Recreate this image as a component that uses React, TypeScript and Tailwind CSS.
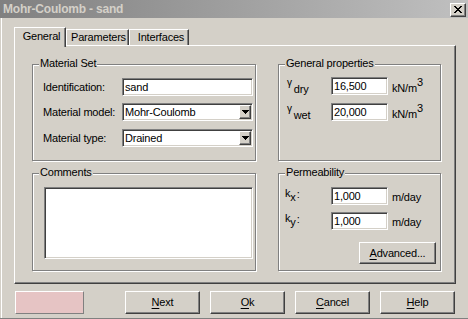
import React from "react";

const RAISED =
  "border border-t-white border-l-white border-r-[#404040] border-b-[#404040] shadow-[inset_-1px_-1px_0_#808080]";
const SUNKEN =
  "bg-white border border-t-[#808080] border-l-[#808080] border-b-white border-r-white shadow-[inset_1px_1px_0_#404040,inset_-1px_-1px_0_#d4d0c8]";
const ETCHED =
  "border border-[#808080] shadow-[inset_1px_1px_0_#fff,1px_1px_0_#fff]";

function Group({
  label,
  className,
  children,
}: {
  label: string;
  className: string;
  children?: React.ReactNode;
}) {
  return (
    <div className={`relative ${ETCHED} ${className}`}>
      <span className="absolute left-[6px] top-[-8px] px-[1px] bg-[#d4d0c8] leading-[13px]">
        {label}
      </span>
      {children}
    </div>
  );
}

function TextBox({ value, className }: { value: string; className: string }) {
  return (
    <div className={`${SUNKEN} h-[18px] flex items-center pl-[2px] ${className}`}>
      <span className="leading-[13px]">{value}</span>
    </div>
  );
}

function Select({ value }: { value: string }) {
  return (
    <div className={`${SUNKEN} w-[131px] h-[18px] flex items-center`}>
      <span className="flex-1 pl-[2px] leading-[13px]">{value}</span>
      <div
        className={`${RAISED} bg-[#d4d0c8] w-[12px] h-[14px] mr-[1px] flex items-center justify-center`}
      >
        <svg width="7" height="4" viewBox="0 0 7 4" shapeRendering="crispEdges">
          <path d="M0 0h7v1h-1v1h-1v1h-1v1h-1v-1h-1v-1h-1v-1h-1z" fill="#000" />
        </svg>
      </div>
    </div>
  );
}

function Button({
  u,
  rest,
  className,
}: {
  u: string;
  rest: string;
  className: string;
}) {
  return (
    <div
      className={`${RAISED} bg-[#d4d0c8] flex items-center justify-center leading-[13px] ${className}`}
    >
      <span>
        <span className="underline underline-offset-[2px]">{u}</span>
        {rest}
      </span>
    </div>
  );
}

function Gamma({ sub }: { sub: string }) {
  return (
    <div className="w-[44px] h-[18px] flex items-start">
      <span className="text-[10px] leading-[10px] mt-[1px]">γ</span>
      <span className="leading-[12px] mt-[6px] ml-[2px]">{sub}</span>
    </div>
  );
}

function KN() {
  return (
    <div className="ml-[4px] h-[18px] flex items-start">
      <span className="leading-[12px] mt-[5px]">kN/m</span>
      <span className="leading-[12px] mt-[-1px] text-[11px]">3</span>
    </div>
  );
}

function K({ sub }: { sub: string }) {
  return (
    <div className="w-[46px] h-[18px] flex items-start">
      <span className="leading-[12px] mt-[0px]">k</span>
      <span className="leading-[12px] mt-[4px] ml-[0px]">{sub}</span>
      <span className="leading-[12px] mt-[1px] ml-[1px]">:</span>
    </div>
  );
}

export default function App() {
  return (
    <div className="w-[468px] h-[319px] bg-[#d4d0c8] border-b border-[#808080] font-['Liberation_Sans',Arial,sans-serif] text-[11px] tracking-[-0.2px] text-black overflow-hidden select-none">
      {/* Title bar */}
      <div className="h-[18px] flex items-center justify-between pl-[3px] pr-[2px] bg-gradient-to-r from-[#808080] to-[#c0c0c0]">
        <span className="font-bold text-[12px] text-[#d4d0c8] leading-[14px] tracking-[-0.2px]">
          Mohr-Coulomb - sand
        </span>
        <div
          className={`${RAISED} bg-[#d4d0c8] w-[16px] h-[14px] flex items-center justify-center mt-[1px]`}
        >
          <svg width="8" height="7" viewBox="0 0 8 7" shapeRendering="crispEdges">
            <path
              d="M0 0h2v1h-2zM6 0h2v1h-2zM1 1h2v1h-2zM5 1h2v1h-2zM2 2h4v1h-4zM3 3h2v1h-2zM2 4h4v1h-4zM1 5h2v1h-2zM5 5h2v1h-2zM0 6h2v1h-2zM6 6h2v1h-2z"
              fill="#000"
            />
          </svg>
        </div>
      </div>

      {/* Body */}
      <div className="h-[300px] shadow-[inset_1px_0_0_#d4d0c8,inset_2px_0_0_#fff]">
        <div className="pl-[14px] pt-[9px]">
          {/* Tabs */}
          <div className="flex items-end h-[18px]">
            <div className="relative z-10 w-[52px] h-[20px] mb-[-2px] bg-[#d4d0c8] border-t border-l border-white border-r border-r-[#404040] shadow-[inset_-1px_0_0_#808080] flex items-center justify-center pl-[3px] pb-[2px]">
              <span className="leading-[13px]">General</span>
            </div>
            <div className="w-[63px] h-[16px] border-t border-l border-white border-r border-r-[#404040] shadow-[inset_-1px_0_0_#808080] flex items-center justify-center pl-[2px]">
              <span className="leading-[13px]">Parameters</span>
            </div>
            <div className="w-[60px] h-[16px] border-t border-l border-white border-r border-r-[#404040] shadow-[inset_-1px_0_0_#808080] flex items-center justify-center pl-[4px]">
              <span className="leading-[13px]">Interfaces</span>
            </div>
          </div>

          {/* Panel */}
          <div className="w-[442px] h-[239px] border border-t-white border-l-white border-r-[#404040] border-b-[#404040] shadow-[inset_-1px_-1px_0_#808080] pt-[18px] pl-[17px]">
            <div className="grid grid-cols-[224px_163px] grid-rows-[97px_98px] gap-x-[22px] gap-y-[12px]">
              <Group label="Material Set" className="">
                <div className="flex flex-col pt-[13px] pl-[10px]">
                  <div className="flex items-center">
                    <span className="w-[79px] leading-[13px]">Identification:</span>
                    <TextBox value="sand" className="w-[131px]" />
                  </div>
                  <div className="flex items-center mt-[7px]">
                    <span className="w-[79px] leading-[13px]">Material model:</span>
                    <Select value="Mohr-Coulomb" />
                  </div>
                  <div className="flex items-center mt-[8px]">
                    <span className="w-[79px] leading-[13px]">Material type:</span>
                    <Select value="Drained" />
                  </div>
                </div>
              </Group>

              <Group label="General properties" className="">
                <div className="flex flex-col pt-[12px] pl-[8px]">
                  <div className="flex items-start">
                    <Gamma sub="dry" />
                    <TextBox value="16,500" className="w-[57px]" />
                    <KN />
                  </div>
                  <div className="flex items-start mt-[8px]">
                    <Gamma sub="wet" />
                    <TextBox value="20,000" className="w-[57px]" />
                    <KN />
                  </div>
                </div>
              </Group>

              <Group label="Comments" className="">
                <div className="pt-[13px] pl-[11px]">
                  <div className={`${SUNKEN} w-[209px] h-[72px]`} />
                </div>
              </Group>

              <Group label="Permeability" className="">
                <div className="flex flex-col pt-[13px] pl-[6px]">
                  <div className="flex items-start">
                    <K sub="x" />
                    <TextBox value="1,000" className="w-[57px]" />
                    <span className="ml-[4px] leading-[12px] mt-[4px]">m/day</span>
                  </div>
                  <div className="flex items-start mt-[7px]">
                    <K sub="y" />
                    <TextBox value="1,000" className="w-[57px]" />
                    <span className="ml-[4px] leading-[12px] mt-[4px]">m/day</span>
                  </div>
                  <div className="flex justify-end mt-[12px] pr-[4px]">
                    <Button u="A" rest="dvanced..." className="w-[77px] h-[22px]" />
                  </div>
                </div>
              </Group>
            </div>
          </div>
        </div>

        {/* Bottom buttons */}
        <div className="flex items-center mt-[7px] pl-[15px]">
          <div className="w-[69px] h-[23px] bg-[#e6c4c4] border border-t-white border-l-white border-r-[#808080] border-b-[#808080]" />
          <div className="flex gap-[10px] ml-[41px]">
            <Button u="N" rest="ext" className="w-[75px] h-[23px]" />
            <Button u="O" rest="k" className="w-[75px] h-[23px]" />
            <Button u="C" rest="ancel" className="w-[75px] h-[23px]" />
            <Button u="H" rest="elp" className="w-[75px] h-[23px]" />
          </div>
        </div>
      </div>
    </div>
  );
}
